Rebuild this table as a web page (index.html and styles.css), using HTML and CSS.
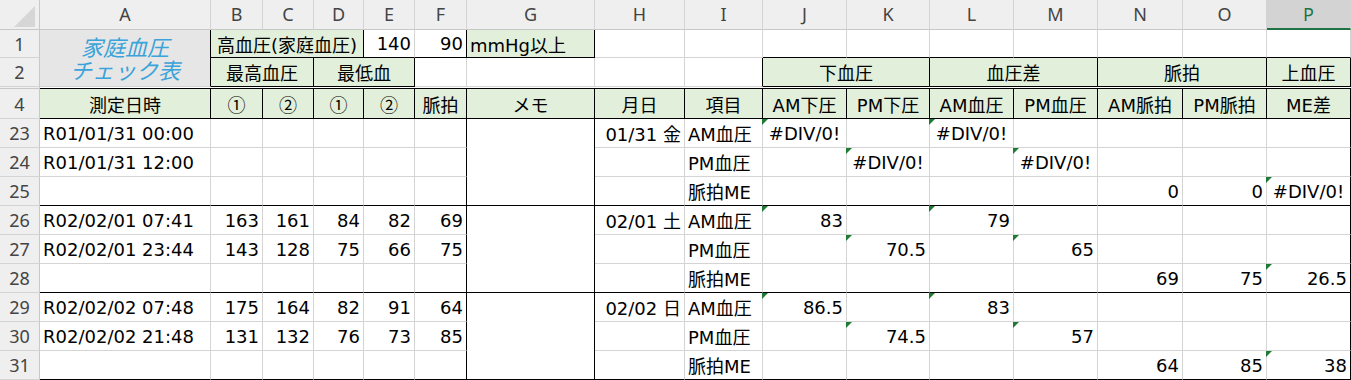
FILE: index.html
```html
<!DOCTYPE html>
<html lang="ja">
<head>
<meta charset="utf-8">
<title>家庭血圧チェック表</title>
<link rel="stylesheet" href="styles.css">
</head>
<body>
<div class="sheet">
  <!-- column headers -->
  <div class="corner"><svg width="40" height="30" viewBox="0 0 40 30"><polygon points="14,27 35,27 35,6" fill="#d6d6d6"/></svg></div>
  <div class="ch">A</div><div class="ch">B</div><div class="ch">C</div><div class="ch">D</div><div class="ch">E</div><div class="ch">F</div><div class="ch">G</div><div class="ch">H</div><div class="ch">I</div><div class="ch">J</div><div class="ch">K</div><div class="ch">L</div><div class="ch">M</div><div class="ch">N</div><div class="ch">O</div><div class="ch sel">P</div>

  <!-- row 1 -->
  <div class="rh">1</div>
  <div class="title"><span>家庭血圧</span><span>チェック表</span></div>
  <div class="c g m kr kb span3">高血圧(家庭血圧)</div>
  <div class="c r kb">140</div>
  <div class="c r kr kb">90</div>
  <div class="c g kr kb">mmHg以上</div>
  <div class="c"></div><div class="c"></div>
  <div class="c kb"></div><div class="c kb"></div><div class="c kb"></div><div class="c kb"></div><div class="c kb"></div><div class="c kb"></div><div class="c kb"></div>

  <!-- row 2 -->
  <div class="rh">2</div>
  <div class="c g m kr kb span2">最高血圧</div>
  <div class="c g m kr kb span2">最低血</div>
  <div class="c"></div><div class="c"></div><div class="c"></div><div class="c kr"></div>
  <div class="c g m kr kb span2">下血圧</div>
  <div class="c g m kr kb span2">血圧差</div>
  <div class="c g m kr kb span2">脈拍</div>
  <div class="c g m kr kb">上血圧</div>

  <!-- row 3 (hidden) -->
  <div class="rh hid"></div>
  <div class="hidrow"></div>

  <!-- row 4 -->
  <div class="rh">4</div>
  <div class="c g m kr kb">測定日時</div>
  <div class="c g m kr kb cjk">①</div>
  <div class="c g m kr kb cjk">②</div>
  <div class="c g m kr kb cjk">①</div>
  <div class="c g m kr kb cjk">②</div>
  <div class="c g m kr kb">脈拍</div>
  <div class="c g m kr kb">メモ</div>
  <div class="c g m kr kb">月日</div>
  <div class="c g m kr kb">項目</div>
  <div class="c g m kr kb">AM下圧</div>
  <div class="c g m kr kb">PM下圧</div>
  <div class="c g m kr kb">AM血圧</div>
  <div class="c g m kr kb">PM血圧</div>
  <div class="c g m kr kb">AM脈拍</div>
  <div class="c g m kr kb">PM脈拍</div>
  <div class="c g m kr kb">ME差</div>

  <!-- row 23 -->
  <div class="rh">23</div>
  <div class="c">R01/01/31 00:00</div>
  <div class="c"></div><div class="c"></div><div class="c"></div><div class="c"></div><div class="c kr"></div>
  <div class="c kr kb memo"></div>
  <div class="c r">01/31 金</div>
  <div class="c">AM血圧</div>
  <div class="c m tri">#DIV/0!</div>
  <div class="c"></div>
  <div class="c m tri">#DIV/0!</div>
  <div class="c"></div><div class="c"></div><div class="c"></div>
  <div class="c kr"></div>

  <!-- row 24 -->
  <div class="rh">24</div>
  <div class="c">R01/01/31 12:00</div>
  <div class="c"></div><div class="c"></div><div class="c"></div><div class="c"></div><div class="c kr"></div>
  <div class="c"></div>
  <div class="c">PM血圧</div>
  <div class="c"></div>
  <div class="c m tri">#DIV/0!</div>
  <div class="c"></div>
  <div class="c m tri">#DIV/0!</div>
  <div class="c"></div><div class="c"></div>
  <div class="c kr"></div>

  <!-- row 25 -->
  <div class="rh">25</div>
  <div class="c kb"></div>
  <div class="c kb"></div><div class="c kb"></div><div class="c kb"></div><div class="c kb"></div><div class="c kr kb"></div>
  <div class="c kb"></div>
  <div class="c kb">脈拍ME</div>
  <div class="c kb"></div><div class="c kb"></div><div class="c kb"></div><div class="c kb"></div>
  <div class="c r kb">0</div>
  <div class="c r kb">0</div>
  <div class="c m kr kb tri">#DIV/0!</div>

  <!-- row 26 -->
  <div class="rh">26</div>
  <div class="c">R02/02/01 07:41</div>
  <div class="c r">163</div><div class="c r">161</div><div class="c r">84</div><div class="c r">82</div><div class="c r kr">69</div>
  <div class="c kr kb memo"></div>
  <div class="c r">02/01 土</div>
  <div class="c">AM血圧</div>
  <div class="c r tri">83</div>
  <div class="c"></div>
  <div class="c r tri">79</div>
  <div class="c"></div><div class="c"></div><div class="c"></div>
  <div class="c kr"></div>

  <!-- row 27 -->
  <div class="rh">27</div>
  <div class="c">R02/02/01 23:44</div>
  <div class="c r">143</div><div class="c r">128</div><div class="c r">75</div><div class="c r">66</div><div class="c r kr">75</div>
  <div class="c"></div>
  <div class="c">PM血圧</div>
  <div class="c"></div>
  <div class="c r tri">70.5</div>
  <div class="c"></div>
  <div class="c r tri">65</div>
  <div class="c"></div><div class="c"></div>
  <div class="c kr"></div>

  <!-- row 28 -->
  <div class="rh">28</div>
  <div class="c kb"></div>
  <div class="c kb"></div><div class="c kb"></div><div class="c kb"></div><div class="c kb"></div><div class="c kr kb"></div>
  <div class="c kb"></div>
  <div class="c kb">脈拍ME</div>
  <div class="c kb"></div><div class="c kb"></div><div class="c kb"></div><div class="c kb"></div>
  <div class="c r kb">69</div>
  <div class="c r kb">75</div>
  <div class="c r kr kb tri">26.5</div>

  <!-- row 29 -->
  <div class="rh">29</div>
  <div class="c">R02/02/02 07:48</div>
  <div class="c r">175</div><div class="c r">164</div><div class="c r">82</div><div class="c r">91</div><div class="c r kr">64</div>
  <div class="c kr kb memo"></div>
  <div class="c r">02/02 日</div>
  <div class="c">AM血圧</div>
  <div class="c r tri">86.5</div>
  <div class="c"></div>
  <div class="c r tri">83</div>
  <div class="c"></div><div class="c"></div><div class="c"></div>
  <div class="c kr"></div>

  <!-- row 30 -->
  <div class="rh">30</div>
  <div class="c">R02/02/02 21:48</div>
  <div class="c r">131</div><div class="c r">132</div><div class="c r">76</div><div class="c r">73</div><div class="c r kr">85</div>
  <div class="c"></div>
  <div class="c">PM血圧</div>
  <div class="c"></div>
  <div class="c r tri">74.5</div>
  <div class="c"></div>
  <div class="c r tri">57</div>
  <div class="c"></div><div class="c"></div>
  <div class="c kr"></div>

  <!-- row 31 -->
  <div class="rh">31</div>
  <div class="c kb"></div>
  <div class="c kb"></div><div class="c kb"></div><div class="c kb"></div><div class="c kb"></div><div class="c kr kb"></div>
  <div class="c kb"></div>
  <div class="c kb">脈拍ME</div>
  <div class="c kb"></div><div class="c kb"></div><div class="c kb"></div><div class="c kb"></div>
  <div class="c r kb">64</div>
  <div class="c r kb">85</div>
  <div class="c r kr kb tri">38</div>
</div>
</body>
</html>
```

FILE: styles.css
```css
html, body {
  margin: 0;
  padding: 0;
  background: #ffffff;
  overflow: hidden;
}

.sheet {
  display: grid;
  grid-template-columns: 40px 171px 52px 51px 50px 51px 52px 128px 90px 78px 84px 83px 84px 84px 85px 84px 84px;
  grid-template-rows: 30px 28px 29px 2px 30px repeat(9, 29px);
  width: 1351px;
  font-family: "DejaVu Sans", "Noto Sans CJK JP", sans-serif;
  font-size: 18px;
  color: #000;
}

.sheet > div {
  box-sizing: border-box;
}

.corner {
  background: #efefef;
  border-right: 1px solid #c8c8c8;
  border-bottom: 1px solid #c8c8c8;
}
.corner svg {
  display: block;
}

.ch {
  background: #efefef;
  border-right: 1px solid #d4d4d4;
  border-bottom: 1px solid #c8c8c8;
  display: flex;
  align-items: center;
  justify-content: center;
  font-family: "Noto Sans", "Open Sans", sans-serif;
  font-size: 18px;
  color: #444;
  padding-bottom: 1px;
}
.ch.sel {
  background: #d3d3d3;
  color: #217346;
  border-bottom: 2px solid #217346;
}

.rh {
  background: #efefef;
  border-right: 1px solid #c8c8c8;
  border-bottom: 1px solid #d4d4d4;
  display: flex;
  align-items: center;
  justify-content: center;
  font-family: "Noto Sans", "Open Sans", sans-serif;
  font-size: 18px;
  color: #444;
}
.rh.hid {
  border-bottom: 1px solid #c8c8c8;
}

.hidrow {
  grid-column: span 16;
  border-bottom: 1px solid #000;
}

.title {
  grid-row: span 2;
  background: #e7e6e6;
  border-right: 1px solid #000;
  border-bottom: 1px solid #d4d4d4;
  display: flex;
  flex-direction: column;
  align-items: center;
  justify-content: center;
  font-family: "Noto Sans CJK JP", sans-serif;
  font-style: italic;
  font-size: 22px;
  line-height: 23px;
  color: #3aa3d9;
}

.c {
  position: relative;
  border-right: 1px solid #d4d4d4;
  border-bottom: 1px solid #d4d4d4;
  padding: 0 3px;
  display: flex;
  align-items: center;
  white-space: nowrap;
}
.g { background: #e2efda; }
.r { justify-content: flex-end; }
.m { justify-content: center; }
.kr { border-right-color: #000; }
.kb { border-bottom-color: #000; }
.cjk { font-family: "Noto Sans CJK JP", sans-serif; }
.span2 { grid-column: span 2; }
.span3 { grid-column: span 3; }
.memo { grid-row: span 3; }

.tri::before {
  content: "";
  position: absolute;
  left: -1px;
  top: 0;
  width: 0;
  height: 0;
  border-top: 6px solid #1e7b34;
  border-right: 6px solid transparent;
}
```
